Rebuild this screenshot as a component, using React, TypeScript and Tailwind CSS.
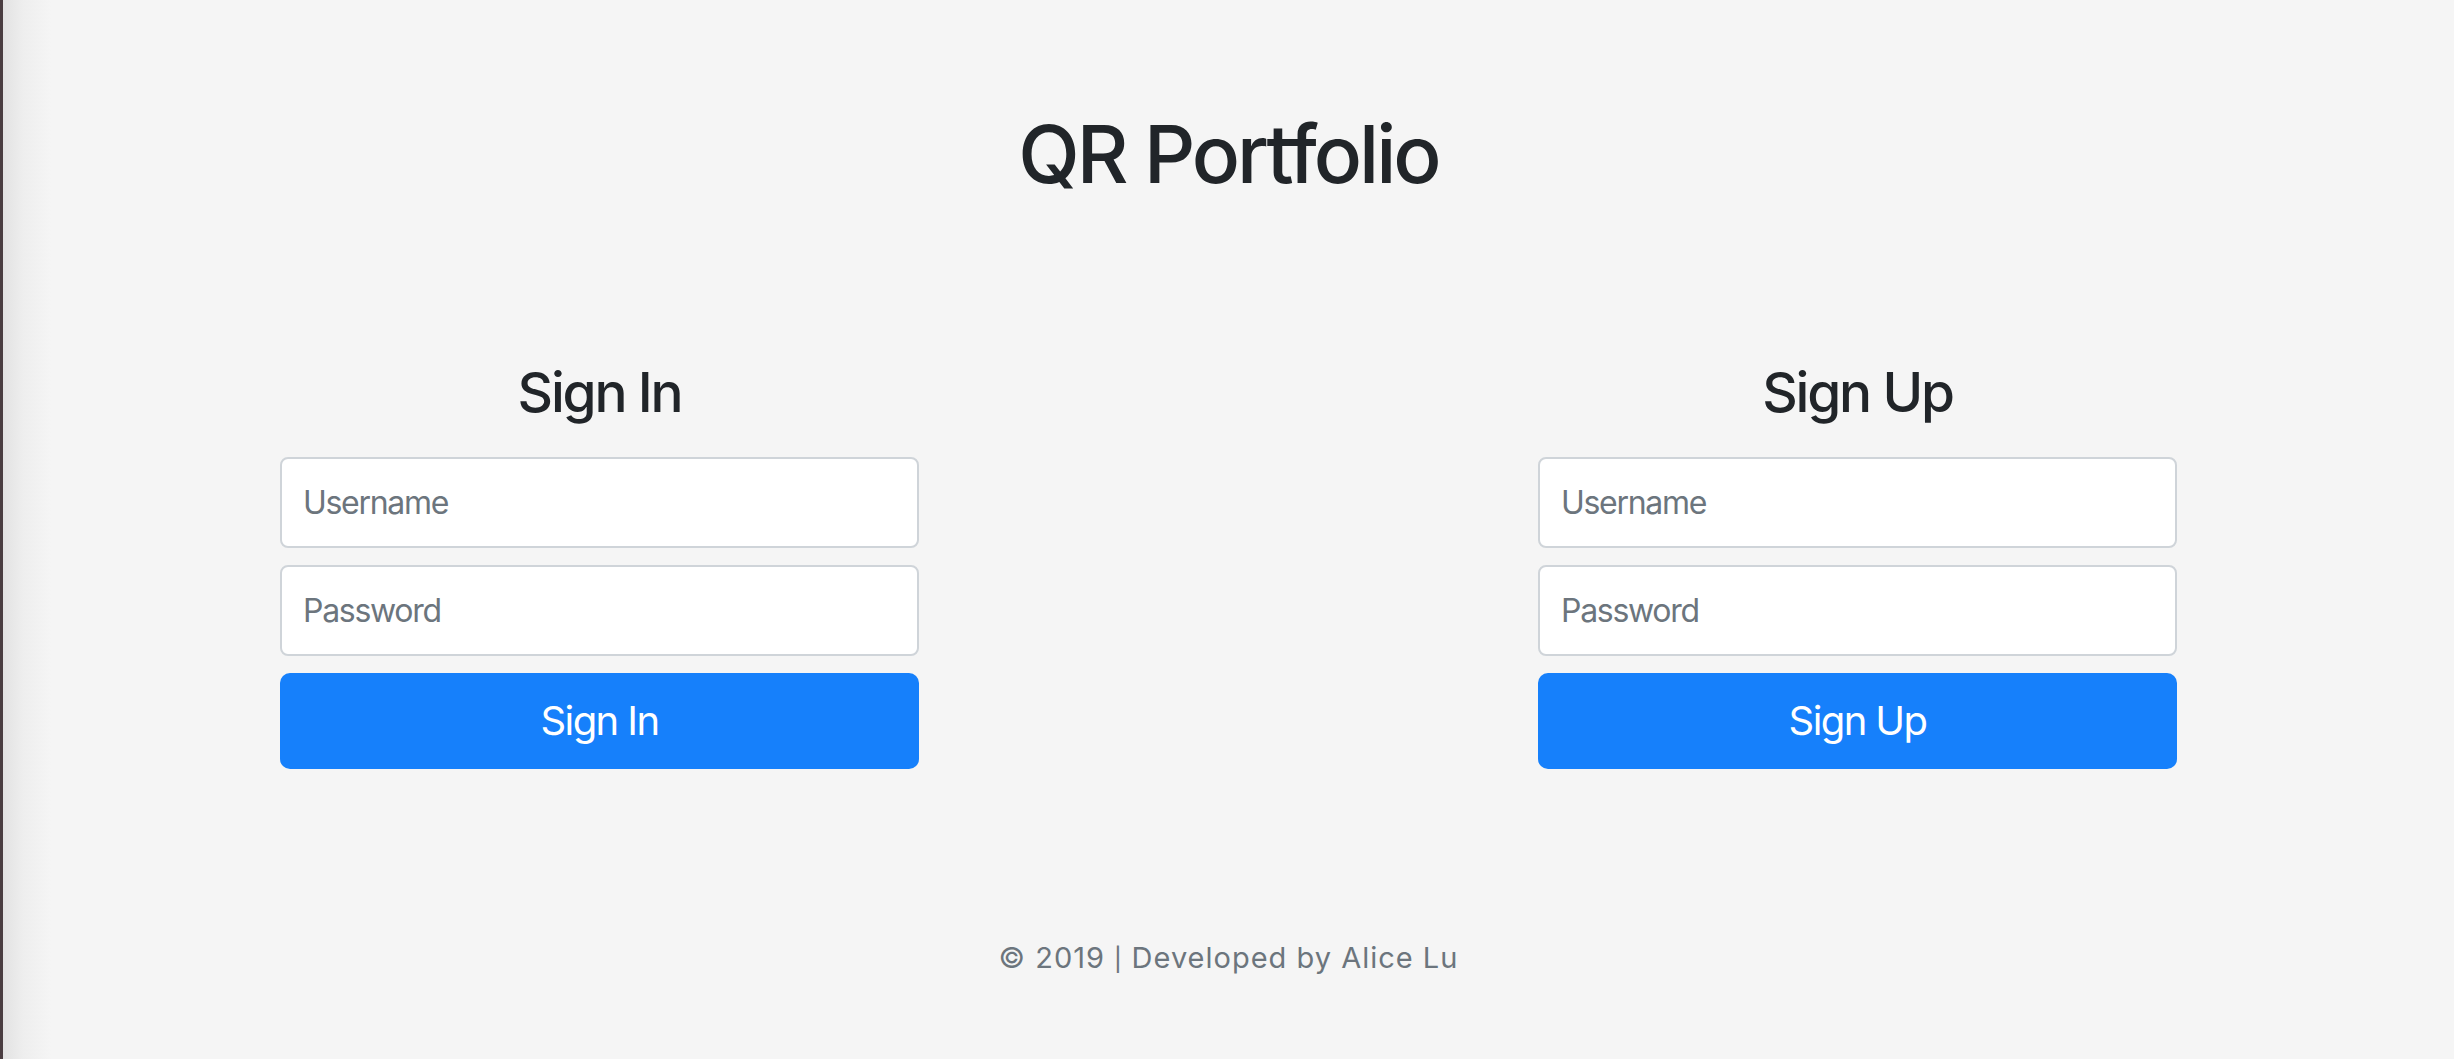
import React from "react";

function AuthForm({ title, action }: { title: string; action: string }) {
  return (
    <div className="flex w-[639px] flex-col">
      <h2 className="text-center text-[55px] font-medium leading-[55px] tracking-[-2.2px] text-[#212529]">{title}</h2>
      <div className="mt-[37px] flex flex-col">
        <input
          type="text"
          placeholder="Username"
          className="h-[91px] w-full rounded-[8px] border-2 border-[#cfd4d9] bg-white px-[21px] text-[32px] tracking-[-1.3px] text-[#495057] outline-none placeholder:text-[#6c757d]"
        />
        <input
          type="password"
          placeholder="Password"
          className="mt-[17px] h-[91px] w-full rounded-[8px] border-2 border-[#cfd4d9] bg-white px-[21px] text-[32px] tracking-[-1.3px] text-[#495057] outline-none placeholder:text-[#6c757d]"
        />
        <button
          type="button"
          className="mt-[17px] h-[96px] w-full rounded-[10px] bg-[#1680fb] text-[40px] leading-none tracking-[-1.6px] text-white"
        >
          {action}
        </button>
      </div>
    </div>
  );
}

export default function App() {
  return (
    <div
      className="flex h-[1059px] w-full flex-col items-center overflow-hidden border-l-[3px] border-[#4a3d41] bg-[linear-gradient(to_right,#e2e2e2_0px,#eeeeee_20px,#f5f5f5_48px)]"
      style={{ fontFamily: "Inter, 'Liberation Sans', sans-serif" }}
    >
      <h1 className="mt-[114px] text-[80px] font-medium leading-[80px] tracking-[-3px] text-[#212529]">QR Portfolio</h1>
      <div className="mt-[171px] flex w-[1897px] justify-between">
        <AuthForm title="Sign In" action="Sign In" />
        <AuthForm title="Sign Up" action="Sign Up" />
      </div>
      <footer className="mt-[173px] text-[29px] leading-[29px] tracking-[1px] text-[#6c757d]">
        © 2019 <span className="font-[Lato]">|</span> Developed by Alice Lu
      </footer>
    </div>
  );
}
